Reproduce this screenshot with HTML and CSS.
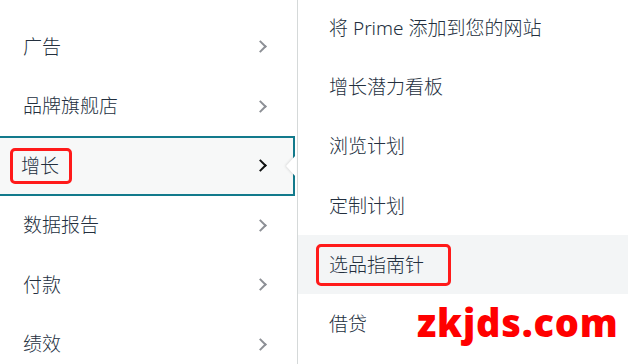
FILE: index.html
```html
<!DOCTYPE html>
<html lang="zh-CN">
<head>
<meta charset="utf-8">
<link rel="stylesheet" href="styles.css">
</head>
<body>
<div class="page">
  <nav class="menu">
    <div class="row"><span class="label">广告</span><span class="chev"></span></div>
    <div class="row"><span class="label">品牌旗舰店</span><span class="chev"></span></div>
    <div class="row active"><span class="label"><span class="mark">增长</span></span><span class="chev"></span><span class="notch"></span></div>
    <div class="row"><span class="label">数据报告</span><span class="chev"></span></div>
    <div class="row"><span class="label">付款</span><span class="chev"></span></div>
    <div class="row"><span class="label">绩效</span><span class="chev"></span></div>
  </nav>
  <div class="sub">
    <div class="item">将 Prime 添加到您的网站</div>
    <div class="item">增长潜力看板</div>
    <div class="item">浏览计划</div>
    <div class="item">定制计划</div>
    <div class="item hover"><span class="mark2">选品指南针</span></div>
    <div class="item">借贷</div>
  </div>
  <div class="watermark">zkjds.com</div>
</div>
</body>
</html>
```

FILE: styles.css
```css
html, body {
  margin: 0;
  padding: 0;
  background: #ffffff;
}
body {
  font-family: "Noto Sans", "Noto Sans CJK SC", sans-serif;
  font-weight: 300;
  color: #232f3e;
  font-size: 19px;
}
.page {
  position: relative;
  width: 628px;
  height: 364px;
  overflow: hidden;
  display: flex;
}
.menu {
  width: 297px;
  flex: none;
  border-right: 1px solid #d5d9d9;
  padding-top: 17px;
  box-sizing: content-box;
}
.row {
  position: relative;
  height: 59.5px;
  display: flex;
  align-items: center;
  justify-content: space-between;
  padding-left: 23px;
  padding-right: 30px;
  box-sizing: border-box;
}
.label {
  line-height: 24px;
  white-space: nowrap;
}
.chev {
  width: 7px;
  height: 7px;
  border-right: 2px solid #8d9096;
  border-top: 2px solid #8d9096;
  transform: rotate(45deg);
  margin-right: 2px;
}
.row.active {
  background: #f7f8f8;
  border: 2px solid #127a8c;
  margin-left: -4px;
  margin-right: 2px;
  padding-left: 25px;
  padding-right: 26px;
}
.row.active .chev {
  border-color: #0f1111;
  border-width: 2.5px 2.5px 0 0;
}
.notch {
  position: absolute;
  right: -3px;
  top: 50%;
  margin-top: -11px;
  width: 0;
  height: 0;
  border-top: 11px solid transparent;
  border-bottom: 11px solid transparent;
  border-right: 10px solid #ffffff;
  filter: drop-shadow(-1px 0 1px rgba(0,0,0,0.12));
}
.mark {
  display: inline-block;
  border: 3px solid #ff1a1a;
  border-radius: 5px;
  padding: 3px 10px 3px 8px;
  margin-left: -13px;
}
.sub {
  flex: 1;
  margin-top: -1.5px;
}
.item {
  height: 59.2px;
  display: flex;
  align-items: center;
  padding-left: 31px;
  line-height: 24px;
  white-space: nowrap;
}
.item.hover {
  background: #f3f5f6;
}
.mark2 {
  display: inline-block;
  border: 3px solid #ff1a1a;
  border-radius: 5px;
  padding: 6px 24px 6px 10px;
  margin-left: -13px;
}
.watermark {
  position: absolute;
  left: 417px;
  top: 295px;
  font-family: "Open Sans", sans-serif;
  font-weight: 800;
  font-size: 38px;
  line-height: 54px;
  color: #ff0000;
  letter-spacing: 0.8px;
}
```
